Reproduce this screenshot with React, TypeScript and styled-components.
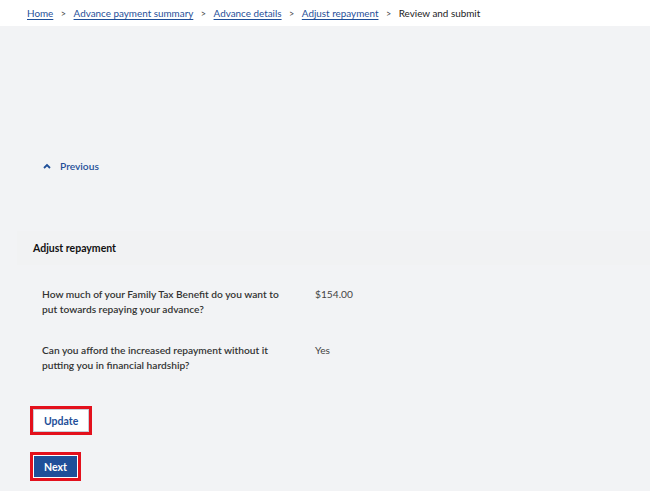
import styled, { createGlobalStyle } from "styled-components";

const GlobalStyle = createGlobalStyle`
  html, body {
    margin: 0;
    padding: 0;
    background: #f2f3f5;
    font-family: Lato, "Noto Sans", sans-serif;
    font-size: 10.2px;
    color: #222;
  }
`;

const Page = styled.div`
  width: 650px;
  min-height: 491px;
  background: #f2f3f5;
`;

const Crumbs = styled.nav`
  background: #fff;
  height: 26px;
  display: flex;
  align-items: center;
  padding-left: 27px;
  gap: 7.5px;
  font-size: 9.9px;
`;

const CrumbLink = styled.a`
  color: #1f4f99;
  text-decoration: underline;
  text-underline-offset: 2px;
`;

const Sep = styled.span`
  color: #444;
  font-size: 9px;
`;

const Current = styled.span`
  color: #222;
`;

const Body = styled.main`
  padding-top: 130px;
`;

const PrevLink = styled.a`
  display: flex;
  align-items: center;
  gap: 9px;
  margin-left: 43px;
  color: #1f4f99;
  font-weight: 600;
  text-decoration: none;
  height: 20px;
`;

const Band = styled.section`
  margin-top: 55px;
  margin-left: 17px;
  background: #f1f2f3;
  height: 34px;
  display: flex;
  align-items: center;
  padding-left: 16px;
`;

const Heading = styled.h2`
  margin: 0;
  font-size: 10.5px;
  font-weight: 700;
  color: #111;
`;

const List = styled.dl`
  margin: 22px 0 0 42px;
  display: grid;
  grid-template-columns: 273px auto;
  row-gap: 26px;
`;

const Question = styled.dt`
  width: 250px;
  line-height: 15px;
  color: #333;
  font-weight: 600;
`;

const Answer = styled.dd`
  margin: 0;
  line-height: 15px;
  color: #444;
`;

const Actions = styled.div`
  margin: 33px 0 0 30px;
  display: flex;
  flex-direction: column;
  align-items: flex-start;
  gap: 17px;
`;

const Button = styled.button<{ $primary?: boolean }>`
  font-family: inherit;
  font-size: 10.5px;
  font-weight: 700;
  height: 29px;
  padding: 0 ${(p) => (p.$primary ? 11 : 11)}px;
  border: 3px solid #e3101c;
  background: ${(p) => (p.$primary ? "#1f4f99" : "#fff")};
  color: ${(p) => (p.$primary ? "#fff" : "#1f4f99")};
  box-shadow: inset 0 0 0 1px ${(p) => (p.$primary ? "#fff" : "#c9ced8")};
`;

const rows = [
  {
    q: "How much of your Family Tax Benefit do you want to put towards repaying your advance?",
    a: "$154.00",
  },
  {
    q: "Can you afford the increased repayment without it putting you in financial hardship?",
    a: "Yes",
  },
];

export default function App() {
  const crumbs = ["Home", "Advance payment summary", "Advance details", "Adjust repayment"];
  return (
    <Page>
      <GlobalStyle />
      <Crumbs>
        {crumbs.map((c) => (
          <span key={c} style={{ display: "contents" }}>
            <CrumbLink href="#">{c}</CrumbLink>
            <Sep>&gt;</Sep>
          </span>
        ))}
        <Current>Review and submit</Current>
      </Crumbs>
      <Body>
        <PrevLink href="#">
          <svg width="8" height="6" viewBox="0 0 8 6">
            <path d="M1 5 L4 2 L7 5" stroke="#1f4f99" strokeWidth="1.8" fill="none" />
          </svg>
          Previous
        </PrevLink>
        <Band>
          <Heading>Adjust repayment</Heading>
        </Band>
        <List>
          {rows.map((r) => (
            <div key={r.a} style={{ display: "contents" }}>
              <Question>{r.q}</Question>
              <Answer>{r.a}</Answer>
            </div>
          ))}
        </List>
        <Actions>
          <Button>Update</Button>
          <Button $primary>Next</Button>
        </Actions>
      </Body>
    </Page>
  );
}
